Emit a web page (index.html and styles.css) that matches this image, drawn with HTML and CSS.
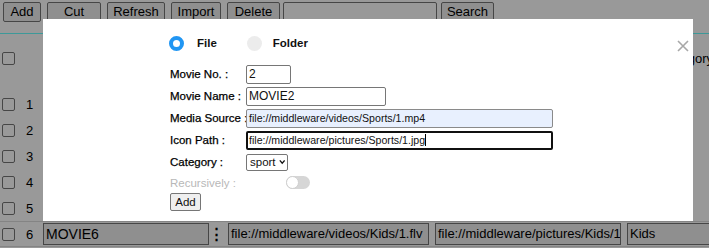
FILE: index.html
```html
<!DOCTYPE html>
<html>
<head>
<meta charset="utf-8">
<link rel="stylesheet" href="styles.css">
</head>
<body>
<div class="page">
  <div class="toolbar">
    <button class="btn b-add">Add</button>
    <button class="btn b-cut">Cut</button>
    <button class="btn b-refresh">Refresh</button>
    <button class="btn b-import">Import</button>
    <button class="btn b-delete">Delete</button>
    <input class="search" type="text">
    <button class="btn b-search">Search</button>
  </div>
  <div class="table">
    <div class="thead">
      <span class="cb"></span>
      <span class="hcat">Category</span>
    </div>
    <div class="row"><span class="cb"></span><span class="num">1</span></div>
    <div class="row"><span class="cb"></span><span class="num">2</span></div>
    <div class="row"><span class="cb"></span><span class="num">3</span></div>
    <div class="row"><span class="cb"></span><span class="num">4</span></div>
    <div class="row"><span class="cb"></span><span class="num">5</span></div>
    <div class="row r6">
      <span class="cb"></span><span class="num">6</span>
      <span class="cell c-name">MOVIE6</span>
      <span class="kebab">&#8942;</span>
      <span class="cell c-src">file://middleware/videos/Kids/1.flv</span>
      <span class="cell c-icon">file://middleware/pictures/Kids/1</span>
      <span class="cell c-cat">Kids</span>
    </div>
  </div>
</div>
<div class="overlay"></div>
<div class="modal">
  <svg class="close" width="12" height="12" viewBox="0 0 12 12"><path d="M1 1 L11 11 M11 1 L1 11" stroke="#a8a8a8" stroke-width="1.6" fill="none"/></svg>
  <div class="radios">
    <span class="radio on"></span><span class="rlabel">File</span>
    <span class="radio off"></span><span class="rlabel">Folder</span>
  </div>
  <div class="form">
    <label>Movie No. :</label><div><span class="inp w-no">2</span></div>
    <label>Movie Name :</label><div><span class="inp w-name">MOVIE2</span></div>
    <label>Media Source :</label><div><span class="inp w-long auto">file://middleware/videos/Sports/1.mp4</span></div>
    <label>Icon Path :</label><div><span class="inp w-long focus">file://middleware/pictures/Sports/1.jpg<span class="caret"></span></span></div>
    <label>Category :</label><div><span class="sel">sport<svg width="8" height="6" viewBox="0 0 8 6"><path d="M1 1 L4 4.5 L7 1" stroke="#111" stroke-width="1.6" fill="none"/></svg></span></div>
    <label class="dis">Recursively :</label><div><span class="toggle"><span class="knob"></span></span></div>
    <div class="addrow"><span class="addbtn">Add</span></div>
  </div>
</div>
</body>
</html>
```
FILE: styles.css
```css
* { box-sizing: border-box; }
html, body { margin: 0; padding: 0; }
body { width: 709px; height: 248px; overflow: hidden; background: #fff; font-family: "Liberation Sans", Arial, sans-serif; font-size: 13px; color: #000; position: relative; }

.toolbar { display: flex; align-items: center; height: 22px; padding: 1px 0 0 3px; }
.btn { font-family: "Liberation Sans", Arial, sans-serif; font-size: 13px; height: 20px; padding: 0; margin: 0 6px 0 0; background: #efefef; border: 1px solid #767676; border-radius: 2px; color: #000; }
.b-add { width: 38px; }
.b-cut { width: 54px; }
.b-refresh { width: 58px; }
.b-import { width: 50px; }
.b-delete { width: 53px; margin-right: 3px; }
.search { width: 154px; height: 20px; margin: 0 4px 0 0; border: 1px solid #767676; border-radius: 2px; background: #fff; }
.b-search { width: 53px; }

.table { margin-top: 11px; border-top: 1px solid #66ffff; }
.thead { display: flex; align-items: flex-start; height: 57px; padding-top: 18px; }
.hcat { margin-left: auto; margin-right: -4px; margin-top: -1px; }
.row { display: flex; align-items: center; height: 26px; }
.r6 { border-top: 1px solid #ddd; border-bottom: 1px solid #ddd; }
.cb { display: inline-block; width: 13px; height: 13px; border: 1px solid #767676; border-radius: 2px; background: #fff; margin-left: 2px; flex: none; }
.num { width: 28px; padding-left: 11px; flex: none; }
.cell { display: block; height: 22px; line-height: 20px; border: 1px solid #767676; background: #efefef; padding: 0 2px; white-space: nowrap; overflow: hidden; font-size: 13px; flex: none; }
.c-name { width: 166px; font-size: 14px; }
.kebab { width: 19px; padding-left: 0; text-align: left; font-weight: bold; font-size: 15px; flex: none; }
.c-src { width: 201px; }
.c-icon { width: 186px; margin-left: 6px; }
.c-cat { width: 100px; margin-left: 6px; }

.overlay { position: fixed; inset: 0; background: rgba(0,0,0,0.4); }

.modal { position: absolute; left: 43px; top: 19px; width: 650px; height: 202px; background: #fff; font-size: 11.5px; color: #111; }
.close { position: absolute; left: 634px; top: 21px; }
.radios { display: flex; align-items: center; height: 16px; margin: 16px 0 0 126px; }
.radio { display: inline-block; width: 15px; height: 15px; border-radius: 50%; flex: none; }
.radio.on { border: 4px solid #2196f3; background: #fff; }
.radio.off { background: #ececec; }
.rlabel { font-weight: bold; font-size: 11.5px; color: #111; }
.radios .rlabel:nth-child(2) { margin: 0 30px 0 13px; }
.radios .rlabel:nth-child(4) { margin-left: 11px; }

.form { display: grid; grid-template-columns: 76px auto; grid-template-rows: 22px 22px 22px 22px 22px 19px 20px; margin: 12px 0 0 127px; align-items: center; }
.form label { color: #000; white-space: nowrap; -webkit-text-stroke: 0.25px #000; }
.form label.dis { color: #b8b8b8; -webkit-text-stroke: 0; }
.form > div { display: flex; align-items: center; }
.inp { display: block; height: 19px; line-height: 17px; border: 1px solid #767676; border-radius: 2px; padding: 0 2px; color: #111; white-space: nowrap; overflow: hidden; background: #fff; font-size: 10.6px; }
.w-no { width: 45px; font-size: 12px; }
.w-name { width: 140px; font-size: 12px; }
.w-long { width: 307px; }
.auto { background: #e8f0fe; border-color: #8a8a8a; }
.focus { border: 2px solid #101010; line-height: 15px; padding-left: 1px; }
.caret { display: inline-block; width: 1px; height: 12px; background: #000; vertical-align: -2px; }
.sel { display: flex; align-items: center; gap: 3px; height: 17px; width: 42px; border: 1px solid #767676; border-radius: 2px; padding: 0 2px 0 3px; color: #111; font-size: 11.5px; }
.toggle { display: block; width: 24px; height: 13px; border-radius: 7px; background: #d6d6d6; margin-left: 40px; position: relative; }
.knob { position: absolute; left: 0; top: 0; width: 13px; height: 13px; border-radius: 50%; background: #fff; border: 1px solid #cfcfcf; }
.addrow { grid-column: 1 / 3; }
.addbtn { display: inline-block; height: 18px; width: 31px; border: 1px solid #767676; border-radius: 2px; background: #efefef; text-align: center; line-height: 16px; color: #111; }
```
